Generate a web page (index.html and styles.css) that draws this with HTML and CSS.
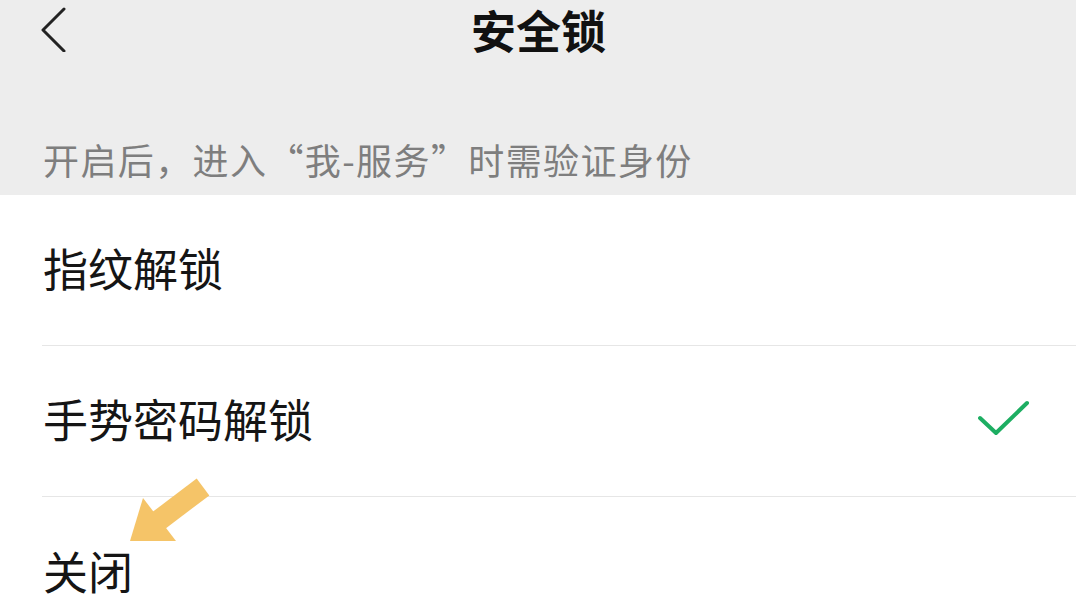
FILE: index.html
```html
<!DOCTYPE html>
<html lang="zh-CN">
<head>
    <meta charset="UTF-8">
    <meta name="viewport" content="width=device-width, initial-scale=1.0">
    <title>安全锁</title>
    <link rel="stylesheet" href="styles.css">
</head>
<body>
    <div class="page">
        <div class="header">
            <div class="topbar">
                <svg class="back-icon" width="30" height="46" viewBox="0 0 30 46">
                    <polyline points="25,3 4,24 25,45" fill="none" stroke="#222" stroke-width="3" stroke-linecap="round" stroke-linejoin="round"/>
                </svg>
                <h1 class="title">安全锁</h1>
            </div>
            <div class="tip">开启后，进入“我-服务”时需验证身份</div>
        </div>

        <ul class="options">
            <li class="option">指纹解锁</li>
            <li class="option">
                <span>手势密码解锁</span>
                <svg class="check" width="56" height="40" viewBox="0 0 56 40">
                    <polyline points="5,18 21,33 52,3" fill="none" stroke="#1dae62" stroke-width="4" stroke-linecap="round" stroke-linejoin="round"/>
                </svg>
            </li>
            <li class="option option-last">关闭</li>
        </ul>

        <!-- hint arrow drawn over the list -->
        <svg class="hint-arrow" width="90" height="75" viewBox="0 0 90 75">
            <polygon points="5,66 51,66 18,23" fill="#f5c468"/>
            <line x1="33" y1="46" x2="78" y2="12" stroke="#f5c468" stroke-width="21"/>
        </svg>
    </div>
</body>
</html>
```

FILE: styles.css
```css
* {
    margin: 0;
    padding: 0;
    box-sizing: border-box;
}

body {
    background: #ffffff;
    font-family: "Noto Sans CJK SC", "Noto Sans", sans-serif;
    overflow: hidden;
}

.page {
    position: relative;
    width: 1076px;
    height: 605px;
    overflow: hidden;
}

.header {
    background: #ededed;
    height: 195px;
}

.topbar {
    position: relative;
    height: 60px;
    display: flex;
    align-items: center;
    justify-content: center;
}

.back-icon {
    position: absolute;
    left: 39px;
    top: 6px;
}

.title {
    font-size: 45px;
    line-height: 56px;
    font-weight: 700;
    color: #111;
    margin-left: 1px;
}

.tip {
    height: 135px;
    display: flex;
    align-items: flex-end;
    padding: 0 0 14px 43px;
    font-size: 36px;
    line-height: 44px;
    letter-spacing: 1.4px;
    color: #7e7e7e;
}

.options {
    list-style: none;
}

.option {
    height: 151px;
    margin-left: 42px;
    padding: 0 45px 4px 1px;
    display: flex;
    align-items: center;
    justify-content: space-between;
    font-size: 45px;
    line-height: 56px;
    color: #151515;
    border-bottom: 1px solid #e6e6e6;
}

.option-last {
    border-bottom: none;
}

.check {
    margin-top: 2px;
}

.hint-arrow {
    position: absolute;
    left: 125px;
    top: 475px;
}
```
